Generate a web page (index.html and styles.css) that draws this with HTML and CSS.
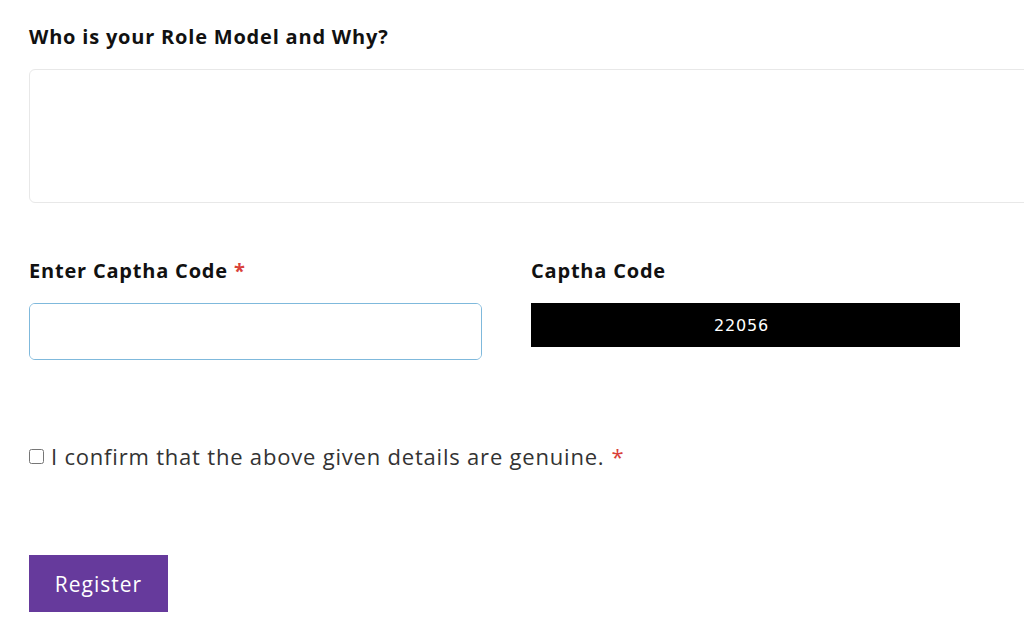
FILE: index.html
```html
<!DOCTYPE html>
<html>
    <head>
        <title>Register</title>
        <link rel="stylesheet" href="styles.css">
    </head>
    <body>
        <form class="form">
            <div class="field">
                <label class="label" for="role">Who is your Role Model and Why?</label>
                <textarea class="area" id="role"></textarea>
            </div>
            <div class="row">
                <div class="field">
                    <label class="label" for="code">Enter Captha Code <span class="req">*</span></label>
                    <div class="input-wrap">
                        <input class="input" id="code" type="text">
                    </div>
                </div>
                <div class="field">
                    <span class="label">Captha Code</span>
                    <div class="captcha">22056</div>
                </div>
            </div>
            <label class="confirm">
                <input type="checkbox" class="check">
                I confirm that the above given details are genuine. <span class="req">*</span>
            </label>
            <button type="button" class="btn">Register</button>
        </form>
    </body>
</html>
```

FILE: styles.css
```css
* {
    margin: 0;
    padding: 0;
    box-sizing: border-box;
}
body {
    font-family: "Open Sans", "Noto Sans", sans-serif;
    background-color: #fff;
    color: #111;
    overflow: hidden;
}
.form {
    padding: 25px 0 0 29px;
    width: 1060px;
    display: flex;
    flex-direction: column;
}
.label {
    display: block;
    font-size: 20px;
    font-weight: 700;
    color: #111;
    line-height: 24px;
    letter-spacing: 0.8px;
    margin-bottom: 20px;
}
.req {
    color: #d9413a;
}
.area {
    display: block;
    width: 1020px;
    height: 134px;
    border: 1px solid #e8e8e8;
    border-radius: 6px;
    resize: none;
    outline: none;
}
.row {
    display: grid;
    grid-template-columns: 453px 453px;
    gap: 49px;
    margin-top: 56px;
}
/* blue focus-style frame around the code field */
.input-wrap {
    width: 453px;
    height: 57px;
    border: 1px solid #7fb9dc;
    border-radius: 6px;
    overflow: hidden;
}
.input {
    display: block;
    width: 100%;
    height: 100%;
    border: none;
    outline: none;
    background-color: #fff;
}
.captcha {
    width: 429px;
    height: 44px;
    padding-right: 8px;
    background-color: #000;
    color: #fff;
    font-family: "DejaVu Sans", sans-serif;
    font-size: 16px;
    display: flex;
    align-items: center;
    justify-content: center;
    letter-spacing: 0.8px;
}
.confirm {
    display: flex;
    align-items: center;
    gap: 7px;
    margin-top: 82px;
    font-size: 22px;
    color: #333;
    line-height: 28px;
    letter-spacing: 0.8px;
}
.check {
    width: 15px;
    height: 15px;
    margin: 0;
}
.btn {
    align-self: flex-start;
    margin-top: 85px;
    width: 139px;
    height: 57px;
    background-color: #663a9c;
    color: #fff;
    border: none;
    font-family: inherit;
    font-size: 21px;
    letter-spacing: 1px;
    cursor: pointer;
}
```
